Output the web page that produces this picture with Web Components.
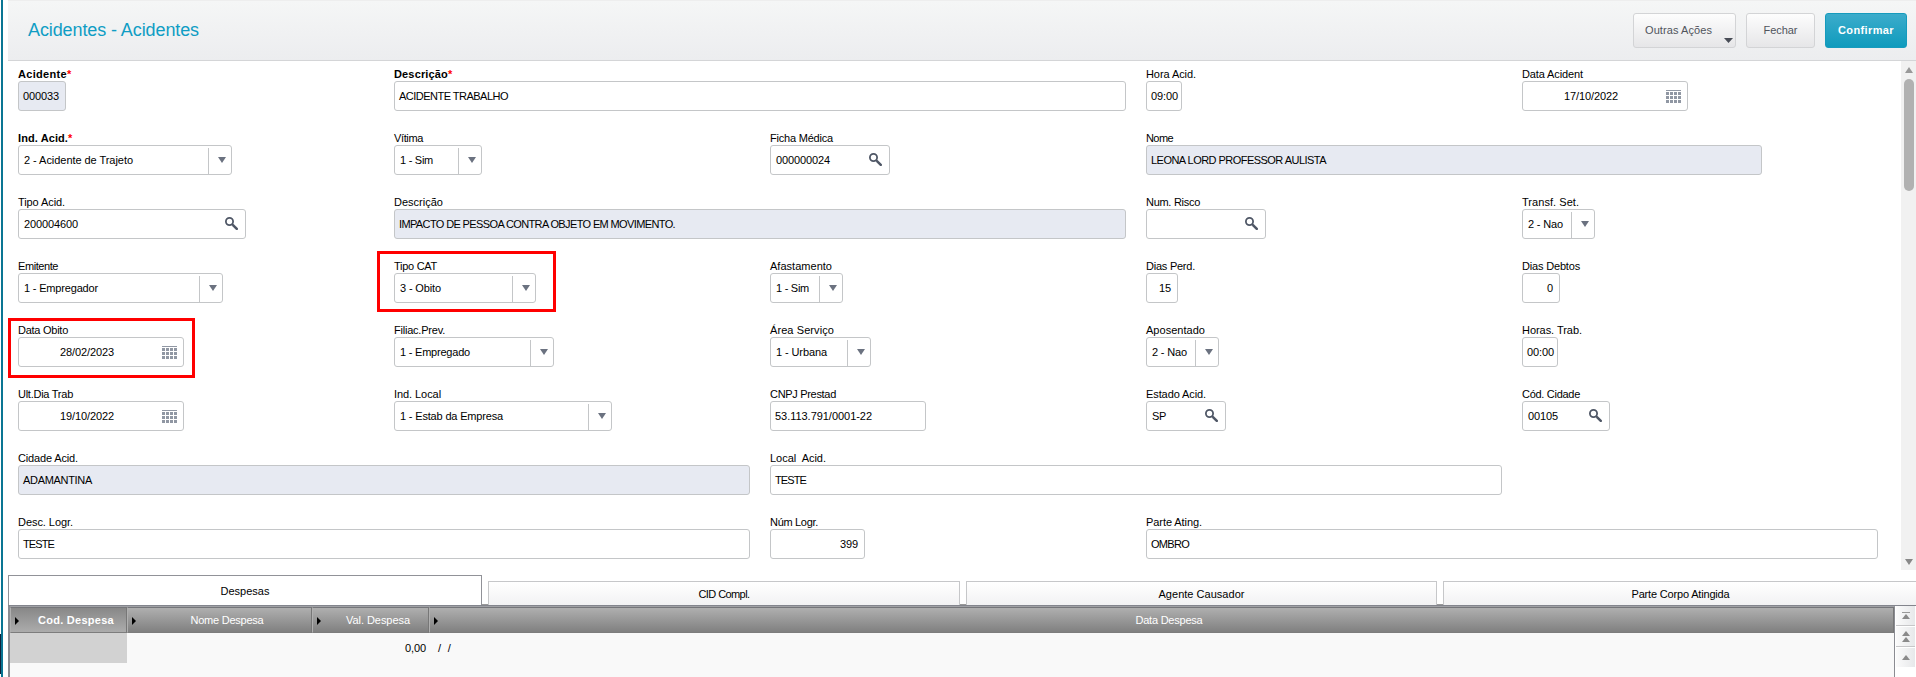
<!DOCTYPE html>
<html lang="pt-BR"><head><meta charset="utf-8"><title>Acidentes</title>
<style>
html,body{margin:0;padding:0;background:#fff;overflow:hidden}
body{width:1916px;height:677px;font:11px/13px "Liberation Sans",Arial,sans-serif;color:#000}
</style></head><body>
<app-window></app-window>
<script>
const define=(name,html,setup)=>customElements.define(name,class extends HTMLElement{
  constructor(){super();this.attachShadow({mode:'open'});}
  connectedCallback(){
    if(this.shadowRoot.firstChild)return;
    const t=document.createElement('template');
    t.innerHTML=typeof html==='function'?html(this):html;
    this.shadowRoot.append(t.content.cloneNode(true));
    if(setup)setup(this);
  }
});

/* text run whose tracking is adjusted to a given advance width */
define('fit-text','<style>:host{display:inline-block;white-space:pre}span{display:inline-block}</style><span><slot></slot></span>',el=>{
  const w=+el.getAttribute('w'),s=el.shadowRoot.querySelector('span'),n=el.textContent.length;
  if(w&&n>1)s.style.letterSpacing=((w-s.getBoundingClientRect().width)/n).toFixed(3)+'px';
});

define('lens-icon',`<style>:host{display:block;width:13px;height:13px}svg{display:block}</style>
<svg width="13" height="13" viewBox="0 0 13 13" fill="none" stroke="#4f5766"><circle cx="4.5" cy="4.5" r="3.6" stroke-width="1.8"/><path d="M7.2 7.2L8.6 8.6" stroke-width="1.8"/><path d="M8.5 8.6L11.8 11.9" stroke-width="2.5" stroke-linecap="round"/></svg>`);

define('calendar-icon',()=>{
  let r='';for(let y=0;y<3;y++)for(let x=0;x<4;x++)r+=`<rect x="${x*4}" y="${2+y*4}" width="3" height="3"/>`;
  return `<style>:host{display:block;width:15px;height:13px}svg{display:block}</style><svg width="15" height="13" fill="#9097a3" shape-rendering="crispEdges"><rect width="15" height="1"/>${r}</svg>`;
});

/* triangle: dir = up | down | right */
define('tri-mark',el=>{
  const w=+el.getAttribute('w'),h=+el.getAttribute('h'),d=el.getAttribute('dir');
  const p={up:`0,${h} ${w},${h} ${w/2},0`,down:`0,0 ${w},0 ${w/2},${h}`,right:`0,0 0,${h} ${w},${h/2}`}[d];
  return `<style>:host{display:block;width:${w}px;height:${h}px}svg{display:block}</style><svg width="${w}" height="${h}"><polygon points="${p}" fill="${el.getAttribute('color')}"/></svg>`;
});

define('form-field',el=>{
  const a=k=>el.getAttribute(k)||'',kind=a('kind');
  const icon={select:'<div class="drop"><tri-mark dir="down" w="8" h="6" color="#6b7280"></tri-mark></div>',lens:'<lens-icon></lens-icon>',date:'<calendar-icon></calendar-icon>'}[kind]||'';
  return `<style>
  :host{display:block;height:64px;position:relative;grid-column:${a('col')};grid-row:${a('row')}}
  label{display:block;height:13px;line-height:13px;white-space:pre;padding-top:1px}
  label.req{font-weight:bold}label i{color:#f00;font-style:normal;font-weight:bold}
  .box{box-sizing:border-box;width:${a('width')}px;height:30px;border:1px solid #c4c6c8;border-radius:3px;background:#fff;display:flex;align-items:center;padding-left:4px}
  .ro{background:#e7eaf2}
  .val{flex:1;line-height:28px;height:28px;white-space:nowrap}
  .select,.lens{padding-left:5px}
  .num .val{text-align:right;padding-right:6px}
  .date{padding-left:41px}
  .drop{width:23px;height:26px;border-left:1px solid #c4c6c8;margin-top:2px;display:flex;align-items:center;padding-left:9px;box-sizing:border-box}
  .drop tri-mark{margin-top:-3px}
  lens-icon{margin:-1px 7px 0 0}calendar-icon{margin:1px 6px 0 0}
  .mark{position:absolute;border:3px solid #f00;box-sizing:border-box;left:var(--ml);top:var(--mt);width:var(--mw);height:var(--mh)}
  </style>
  <label class="${el.hasAttribute('req')?'req':''}"><fit-text w="${a('lw')}">${a('label')}</fit-text>${el.hasAttribute('req')?'<i>*</i>':''}</label>
  <div class="box ${kind} ${el.hasAttribute('ro')?'ro':''}"><div class="val">${a('value')?`<fit-text w="${a('vw')}">${a('value')}</fit-text>`:''}</div>${icon}</div>
  ${el.hasAttribute('mark')?'<div class="mark"></div>':''}`;
});

const F=[
[1,1,'Acidente',49,'000033',36,48,'','ro req'],[2,1,'Descrição',54,'ACIDENTE TRABALHO',109,732,'','req'],[4,1,'Hora Acid.',50,'09:00',27,36],[5,1,'Data Acident',61,'17/10/2022',54,166,'date'],
[1,2,'Ind. Acid.',50,'2 - Acidente de Trajeto',109,214,'select','req'],[2,2,'Vítima',29,'1 - Sim',33,88,'select'],[3,2,'Ficha Médica',63,'000000024',54,120,'lens'],[4,2,'Nome',27,'LEONA LORD PROFESSOR AULISTA',175,616,'','ro'],
[1,3,'Tipo Acid.',47,'200004600',54,228,'lens'],[2,3,'Descrição',49,'IMPACTO DE PESSOA CONTRA OBJETO EM MOVIMENTO.',276,732,'','ro'],[4,3,'Num. Risco',54,'',0,120,'lens'],[5,3,'Transf. Set.',57,'2 - Nao',35,73,'select'],
[1,4,'Emitente',40,'1 - Empregador',74,205,'select'],[2,4,'Tipo CAT',43,'3 - Obito',41,142,'select','mark','--ml:-17px;--mt:-8px;--mw:179px;--mh:61px'],[3,4,'Afastamento',62,'1 - Sim',33,73,'select'],[4,4,'Dias Perd.',49,'15',12,32,'num'],[5,4,'Dias Debtos',58,'0',6,38,'num'],
[1,5,'Data Obito',50,'28/02/2023',54,166,'date','mark','--ml:-10px;--mt:-5px;--mw:187px;--mh:60px'],[2,5,'Filiac.Prev.',51,'1 - Empregado',70,160,'select'],[3,5,'Área Serviço',64,'1 - Urbana',51,101,'select'],[4,5,'Aposentado',59,'2 - Nao',35,73,'select'],[5,5,'Horas. Trab.',60,'00:00',27,36],
[1,6,'Ult.Dia Trab',55,'19/10/2022',54,166,'date'],[2,6,'Ind. Local',47,'1 - Estab da Empresa',103,218,'select'],[3,6,'CNPJ Prestad',66,'53.113.791/0001-22',97,156],[4,6,'Estado Acid.',60,'SP',14,80,'lens'],[5,6,'Cód. Cidade',58,'00105',30,88,'lens'],
[1,7,'Cidade Acid.',60,'ADAMANTINA',69,732,'','ro'],[3,7,'Local  Acid.',56,'TESTE',31,732],
[1,8,'Desc. Logr.',55,'TESTE',31,732],[3,8,'Núm Logr.',48,'399',18,95,'num'],[4,8,'Parte Ating.',56,'OMBRO',38,732]
];
define('accident-form',`<style>:host{display:grid;grid-template-columns:repeat(5,376px);grid-auto-rows:64px;padding:6px 0 0 10px;height:510px;overflow:hidden;box-sizing:border-box;flex:1;min-width:0}</style>`
+F.map(([c,r,l,lw,v,vw,w,k='',f='',s=''])=>`<form-field col="${c}" row="${r}" label="${l}" lw="${lw}" value="${v}" vw="${vw}" width="${w}" kind="${k}" ${f} style="${s}"></form-field>`).join(''));

define('tool-button',`<style>:host{display:flex;box-sizing:border-box;height:35px;border:1px solid #d3d4d6;border-radius:3px;background:linear-gradient(#fdfdfd,#e6e6e8);color:#50545c;align-items:center;justify-content:center;font-size:11px;position:relative}
:host([primary]){border-color:#169bbd;background:linear-gradient(#3caccb,#0f9bbd);color:#fff;font-weight:bold}
:host([menu]){padding-right:12px}tri-mark{position:absolute;right:2px;bottom:4px;display:none}:host([menu]) tri-mark{display:block}</style><slot></slot><tri-mark dir="down" w="9" h="5" color="#484c56"></tri-mark>`);

define('title-bar',`<style>:host{display:flex;box-sizing:border-box;height:61px;border-top:1px solid #eee;border-bottom:1px solid #d4d5d7;background:linear-gradient(#f5f6f6,#ecedef);padding:12px 9px 0 20px}
h1{margin:7px auto 0 0;font-size:18px;line-height:20px;font-weight:normal;color:#0f9dc4}
tool-button+tool-button{margin-left:10px}</style>
<h1><fit-text w="171">Acidentes - Acidentes</fit-text></h1>
<tool-button menu style="width:103px"><fit-text w="67">Outras Ações</fit-text></tool-button><tool-button style="width:69px"><fit-text w="34">Fechar</fit-text></tool-button><tool-button primary style="width:82px"><fit-text w="56">Confirmar</fit-text></tool-button>`);

define('scroll-rail',`<style>:host{display:flex;flex-direction:column;align-items:center;width:15px;height:509px;background:#f1f1f1;box-sizing:border-box;padding:6px 0 5px;justify-content:flex-start}
.thumb{width:10px;height:112px;border-radius:5px;background:#b1b1b1;margin:6px 0 auto 1px}</style><tri-mark dir="up" w="8" h="6" color="#999"></tri-mark><div class="thumb"></div><tri-mark dir="down" w="8" h="6" color="#888"></tri-mark>`);

define('tab-strip',`<style>:host{display:flex;align-items:flex-end;height:30px;margin-top:4px;border-bottom:1px solid #83858d;overflow:hidden;background:linear-gradient(#999,#999) bottom/100% 1px no-repeat}
div{box-sizing:border-box;flex:none;height:24px;margin-left:6px;border:1px solid #c6c7c9;border-bottom:0;background:linear-gradient(#fff,#f2f2f3);text-align:center;line-height:25px}
.on{height:30px;margin:0;border-color:#919298;background:#fff;line-height:30px}</style>
<div class="on" style="width:474px"><fit-text w="49">Despesas</fit-text></div><div style="width:472px"><fit-text w="51">CID Compl.</fit-text></div><div style="width:471px"><fit-text w="86">Agente Causador</fit-text></div><div style="width:475px"><fit-text w="98">Parte Corpo Atingida</fit-text></div>`);

define('grid-head',`<style>:host{display:flex;align-items:center;box-sizing:border-box;height:26px;border-top:1px solid #75767a;border-right:1px solid #777;border-bottom:1px solid #7d7d7d;border-left:1px solid #b0b0b0;background:linear-gradient(#afafaf,#808080);color:#fff;font-size:11px;padding-left:4px}
:host([on]){background:linear-gradient(#888,#acacac);font-weight:bold}
tri-mark{margin-top:2px}
span{flex:1;text-align:center;padding-left:7px}</style><tri-mark dir="right" w="4" h="8" color="#000"></tri-mark><span><slot></slot></span>`);

define('expense-grid',`<style>:host{display:flex;flex:1;height:50px;border-left:2px solid #8b8c92}
.g{width:1884px;background:#f9f9f9;border-top:1px solid #a0a1a5;border-right:1px solid #8b8c92}
.r{display:flex}.c{box-sizing:border-box;height:30px;line-height:31px}
.side{width:19px;margin-left:1px;display:flex;flex-direction:column;gap:1px}
.b{height:19px;background:linear-gradient(90deg,#fbfbfb,#e7e8ea);border-bottom:1px solid #c6c6c8;display:flex;flex-direction:column;align-items:center;justify-content:center}
.b:last-child{border:0}
.bar{border-top:1px solid #999;padding-top:1px}</style>
<div class="g"><div class="r"><grid-head on style="width:117px"><fit-text w="76">Cod. Despesa</fit-text></grid-head><grid-head style="width:185px"><fit-text w="73">Nome Despesa</fit-text></grid-head><grid-head style="width:117px"><fit-text w="64">Val. Despesa</fit-text></grid-head><grid-head style="flex:1"><fit-text w="67">Data Despesa</fit-text></grid-head></div>
<div class="r"><div class="c" style="width:117px;background:#d2d2d2"></div><div class="c" style="width:302px;text-align:right;padding-right:3px"><fit-text w="21">0,00</fit-text></div><div class="c" style="padding-left:9px"><fit-text w="13">/  /</fit-text></div></div></div>
<div class="side"><div class="b"><div class="bar"><tri-mark dir="up" w="8" h="5" color="#8a8a8a"></tri-mark></div></div><div class="b"><tri-mark dir="up" w="8" h="5" color="#8a8a8a"></tri-mark><tri-mark dir="up" w="8" h="5" color="#8a8a8a" style="margin-top:1px"></tri-mark></div><div class="b"><tri-mark dir="up" w="8" h="5" color="#8a8a8a"></tri-mark></div></div>`);

define('app-window',`<style>:host{display:flex;width:1916px;height:677px;overflow:hidden}
.edge{width:1px;background:linear-gradient(#fff 634px,#10223c 634px 674px,#fff 674px)}
.line{width:2px;background:#0a7593}
main{width:1908px;margin-left:5px;flex:none;display:flex;flex-direction:column}
.body{display:flex;height:510px;width:1908px}</style>
<div class="edge"></div><div class="line"></div><main><title-bar></title-bar><div class="body"><accident-form></accident-form><scroll-rail></scroll-rail></div><tab-strip></tab-strip><expense-grid></expense-grid></main>`);
</script></body></html>
